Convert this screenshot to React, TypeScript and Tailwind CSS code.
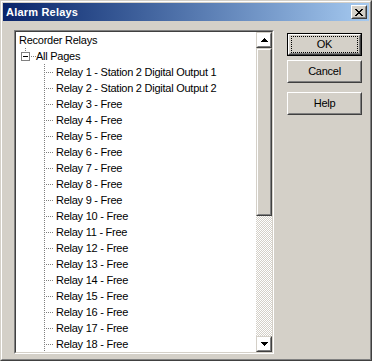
const relays = [
  "Relay 1 - Station 2 Digital Output 1",
  "Relay 2 - Station 2 Digital Output 2",
  "Relay 3 - Free",
  "Relay 4 - Free",
  "Relay 5 - Free",
  "Relay 6 - Free",
  "Relay 7 - Free",
  "Relay 8 - Free",
  "Relay 9 - Free",
  "Relay 10 - Free",
  "Relay 11 - Free",
  "Relay 12 - Free",
  "Relay 13 - Free",
  "Relay 14 - Free",
  "Relay 15 - Free",
  "Relay 16 - Free",
  "Relay 17 - Free",
  "Relay 18 - Free",
];

// classic 3D push button
function Button({ label, isDefault }: { label: string; isDefault?: boolean }) {
  const bevel = (
    <div className="flex h-full w-full border border-t-white border-l-white border-r-[#404040] border-b-[#404040]">
      <div className="flex h-full w-full items-center justify-center border border-t-[#d4d0c8] border-l-[#d4d0c8] border-r-[#808080] border-b-[#808080]">
        {isDefault ? (
          <div className="flex h-[15px] w-[65px] items-center justify-center outline-1 outline-dotted outline-black">
            {label}
          </div>
        ) : (
          label
        )}
      </div>
    </div>
  );
  if (isDefault) {
    return <div className="h-[23px] w-[75px] border border-black">{bevel}</div>;
  }
  return <div className="h-[23px] w-[75px]">{bevel}</div>;
}

function ScrollButton({ up }: { up?: boolean }) {
  return (
    <div className="h-4 w-4 shrink-0 border border-t-[#d4d0c8] border-l-[#d4d0c8] border-r-[#404040] border-b-[#404040]">
      <div className="flex h-full w-full items-center justify-center border border-t-white border-l-white border-r-[#808080] border-b-[#808080]">
        <svg width="7" height="4" viewBox="0 0 7 4" shapeRendering="crispEdges">
          {up ? <path d="M3 0h1v1h1v1h1v1h1v1H0V3h1V2h1V1h1z" fill="#000" /> : <path d="M0 0h7v1H6v1H5v1H4v1H3V3H2V2H1V1H0z" fill="#000" />}
        </svg>
      </div>
    </div>
  );
}

function RelayRow({ text }: { text: string }) {
  return (
    <div className="flex h-4 items-center">
      <svg width="40" height="16" className="shrink-0" shapeRendering="crispEdges">
        <line x1="28.5" y1="0" x2="28.5" y2="16" stroke="#808080" strokeDasharray="1 1" />
        <line x1="29" y1="8.5" x2="38" y2="8.5" stroke="#808080" strokeDasharray="1 1" strokeDashoffset="1" />
      </svg>
      <span className="whitespace-nowrap">{text}</span>
    </div>
  );
}

export default function App() {
  return (
    <div className="h-[361px] w-[372px] overflow-hidden border border-t-[#d4d0c8] border-l-[#d4d0c8] border-r-[#404040] border-b-[#404040] bg-[#d4d0c8] font-['Liberation_Sans',Arial,sans-serif] text-[11px] tracking-[-0.25px] text-black">
      <div className="flex h-full w-full flex-col border border-t-white border-l-white border-r-[#808080] border-b-[#808080] p-px">
        {/* Title bar */}
        <div className="flex h-[18px] shrink-0 items-center justify-between bg-gradient-to-r from-[#0a246a] to-[#a6caf0] pl-[3px] pr-[2px]">
          <span className="text-[11px] font-bold tracking-[0.2px] text-white">Alarm Relays</span>
          <div className="h-[14px] w-4 border border-t-white border-l-white border-r-[#404040] border-b-[#404040] bg-[#d4d0c8]">
            <div className="flex h-full w-full items-center justify-center border border-t-[#d4d0c8] border-l-[#d4d0c8] border-r-[#808080] border-b-[#808080]">
              <svg width="8" height="7" viewBox="0 0 8 7" shapeRendering="crispEdges">
                <path
                  d="M0 0h2v1h1v1h2V1h1V0h2v1H7v1H6v1H5v1h1v1h1v1h1v1H6V6H5V5H3v1H2v1H0V6h1V5h1V4h1V3H2V2H1V1H0z"
                  fill="#000"
                />
              </svg>
            </div>
          </div>
        </div>

        {/* Body */}
        <div className="flex flex-1 pl-[11px] pt-[9px]">
          {/* Tree view */}
          <div className="h-[324px] w-[260px] border border-t-[#808080] border-l-[#808080] border-r-white border-b-white">
            <div className="flex h-full w-full border border-t-[#404040] border-l-[#404040] border-r-[#d4d0c8] border-b-[#d4d0c8] bg-white">
              <div className="flex-1 overflow-hidden">
                <div className="flex h-4 items-center pl-[3px]">Recorder Relays</div>
                <div className="flex h-4 items-center">
                  <svg width="20" height="16" className="shrink-0" shapeRendering="crispEdges">
                    <line x1="9.5" y1="0" x2="9.5" y2="4" stroke="#808080" strokeDasharray="1 1" />
                    <rect x="5.5" y="4.5" width="8" height="8" fill="#fff" stroke="#808080" />
                    <line x1="7" y1="8.5" x2="12" y2="8.5" stroke="#000" />
                    <line x1="14" y1="8.5" x2="20" y2="8.5" stroke="#808080" strokeDasharray="1 1" strokeDashoffset="1" />
                  </svg>
                  <span>All Pages</span>
                </div>
                {relays.map((r) => (
                  <RelayRow key={r} text={r} />
                ))}
              </div>

              {/* Scrollbar */}
              <div className="flex w-4 shrink-0 flex-col">
                <ScrollButton up />
                <div className="h-[168px] shrink-0 border border-t-[#d4d0c8] border-l-[#d4d0c8] border-r-[#404040] border-b-[#404040] bg-[#d4d0c8]">
                  <div className="h-full w-full border border-t-white border-l-white border-r-[#808080] border-b-[#808080]" />
                </div>
                <div className="flex-1 bg-[repeating-conic-gradient(#d4d0c8_0_25%,#ffffff_0_50%)] bg-[length:2px_2px]" />
                <ScrollButton />
              </div>
            </div>
          </div>

          {/* Buttons */}
          <div className="ml-[13px] flex flex-col pt-[3px]">
            <Button label="OK" isDefault />
            <div className="mt-[4px]">
              <Button label="Cancel" />
            </div>
            <div className="mt-[9px]">
              <Button label="Help" />
            </div>
          </div>
        </div>
      </div>
    </div>
  );
}
